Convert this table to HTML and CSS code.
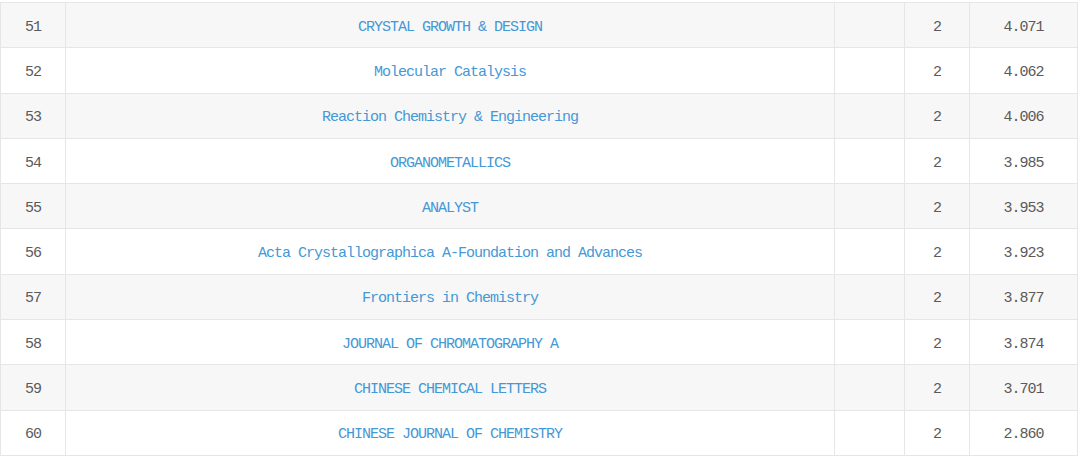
FILE: index.html
```html
<!DOCTYPE html>
<html>
<head>
<meta charset="utf-8">
<link rel="stylesheet" href="styles.css">
</head>
<body>
<div class="table">
  <div class="row odd"><div class="c num">51</div><div class="c name"><a>CRYSTAL GROWTH &amp; DESIGN</a></div><div class="c"></div><div class="c num">2</div><div class="c num">4.071</div></div>
  <div class="row"><div class="c num">52</div><div class="c name"><a>Molecular Catalysis</a></div><div class="c"></div><div class="c num">2</div><div class="c num">4.062</div></div>
  <div class="row odd"><div class="c num">53</div><div class="c name"><a>Reaction Chemistry &amp; Engineering</a></div><div class="c"></div><div class="c num">2</div><div class="c num">4.006</div></div>
  <div class="row"><div class="c num">54</div><div class="c name"><a>ORGANOMETALLICS</a></div><div class="c"></div><div class="c num">2</div><div class="c num">3.985</div></div>
  <div class="row odd"><div class="c num">55</div><div class="c name"><a>ANALYST</a></div><div class="c"></div><div class="c num">2</div><div class="c num">3.953</div></div>
  <div class="row"><div class="c num">56</div><div class="c name"><a>Acta Crystallographica A-Foundation and Advances</a></div><div class="c"></div><div class="c num">2</div><div class="c num">3.923</div></div>
  <div class="row odd"><div class="c num">57</div><div class="c name"><a>Frontiers in Chemistry</a></div><div class="c"></div><div class="c num">2</div><div class="c num">3.877</div></div>
  <div class="row"><div class="c num">58</div><div class="c name"><a>JOURNAL OF CHROMATOGRAPHY A</a></div><div class="c"></div><div class="c num">2</div><div class="c num">3.874</div></div>
  <div class="row odd"><div class="c num">59</div><div class="c name"><a>CHINESE CHEMICAL LETTERS</a></div><div class="c"></div><div class="c num">2</div><div class="c num">3.701</div></div>
  <div class="row"><div class="c num">60</div><div class="c name"><a>CHINESE JOURNAL OF CHEMISTRY</a></div><div class="c"></div><div class="c num">2</div><div class="c num">2.860</div></div>
</div>
</body>
</html>
```

FILE: styles.css
```css
html, body {
  margin: 0;
  padding: 0;
  background: #ffffff;
}
body {
  padding-top: 2px;
  font-family: "Liberation Mono", "DejaVu Sans Mono", monospace;
  font-size: 15px;
  letter-spacing: -1px;
}
.table {
  width: 1078px;
  display: grid;
  grid-template-columns: 64px 768px 69px 64px 107px;
  grid-auto-rows: 44.3px;
  gap: 1px;
  padding: 1px;
  box-sizing: border-box;
  background: #e6e6e6;
}
.row {
  display: contents;
}
.c {
  background: #ffffff;
  display: flex;
  align-items: center;
  justify-content: center;
  padding-top: 4px;
  box-sizing: border-box;
  color: #5a5a5a;
}
.row.odd .c {
  background: #f7f7f7;
}
.name a {
  color: #4598d6;
  text-decoration: none;
}
```
